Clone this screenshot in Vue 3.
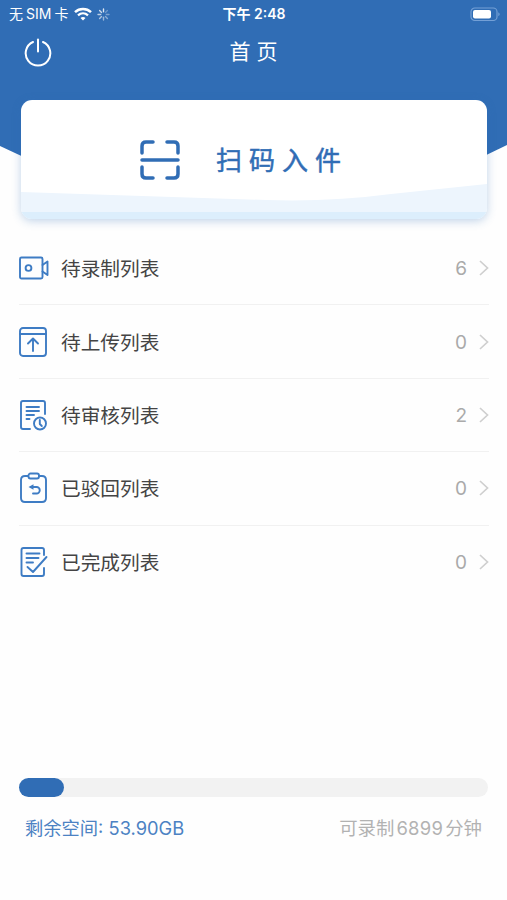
<template>
  <div class="home-page">
    <header class="header">
      <div class="status-bar">
        <div class="status-left">
          <span class="carrier">无<i>SIM</i>卡</span>
          <svg class="wifi" width="18" height="14" viewBox="0 0 18 14" fill="none" stroke="#fff">
            <path d="M1 5.1C5.5.9 12.500.9 17 5.100" stroke-width="2.500" />
            <path d="M4 8.300c2.900-2.600 7.100-2.600 10 0" stroke-width="2.300" />
            <path d="M6.500 10.900c1.500-1.300 3.500-1.300 5 0L9 13.500z" fill="#fff" stroke="none" />
          </svg>
          <svg class="spinner" width="13" height="13" viewBox="0 0 13 13" stroke="#fff" stroke-width="1.400" stroke-linecap="round">
            <line
              v-for="n in 8"
              :key="n"
              x1="6.5"
              y1="1"
              x2="6.5"
              y2="3.7"
              :transform="`rotate(${n * 45} 6.5 6.5)`"
              :opacity="0.2 + n * 0.08"
            />
          </svg>
        </div>
        <div class="time">下午 2:48</div>
        <svg class="battery" width="31" height="15" viewBox="0 0 31 15">
          <rect x="1" y="1" width="26" height="12.500" rx="3.800" fill="none" stroke="#74a0d6" stroke-width="1.200" />
          <rect x="3" y="3" width="18" height="8.500" rx="2" fill="#fff" />
          <path d="M28.500 5.200q2 2 0 4z" fill="#8db4e2" />
        </svg>
      </div>
      <div class="nav-bar">
        <button class="logout" aria-label="退出">
          <svg width="28" height="29" viewBox="0 0 28 29" fill="none" stroke="#fff" stroke-width="2" stroke-linecap="round">
            <path d="M9 4A12.300 12.300 0 1 0 19 4" />
            <path d="M14 1.500v12" />
          </svg>
        </button>
        <h1>首页</h1>
      </div>
    </header>

    <button class="scan-card">
      <svg class="wave" width="466" height="119" viewBox="0 0 466 119">
        <path d="M0 92L245 100Q310 102 370 94L466 84V119H0z" fill="#edf5fd" />
        <path d="M0 112H466V119H0z" fill="#dceefc" />
      </svg>
      <svg class="scan-icon" width="40" height="40" viewBox="0 0 40 40" fill="none" stroke="#306db5" stroke-width="3.500" stroke-linecap="round">
        <path d="M2 13V6q0-4 4-4h7M27 2h7q4 0 4 4v7M38 27v7q0 4-4 4h-7M13 38H6q-4 0-4-4v-7M2 20h36" />
      </svg>
      <span class="scan-text">扫码入件</span>
    </button>

    <ul class="list">
      <li v-for="item in items" :key="item.label" class="row">
        <svg class="row-icon" width="30" height="32" viewBox="0 0 30 32" fill="none" stroke="#3e7cc4" stroke-width="1.900" stroke-linecap="round" stroke-linejoin="round">
          <g v-if="item.icon === 'video'">
            <rect x="1" y="5.500" width="22.500" height="21" rx="1.500" />
            <circle cx="9.500" cy="16" r="2.900" />
            <path d="M23.500 13l5-3.500v13.500l-5-3.500" />
          </g>
          <g v-else-if="item.icon === 'upload'">
            <rect x="1" y="2" width="26" height="28" rx="3" />
            <path d="M1 8h26M14 25V13M9 17.500l5-5 5 5" />
          </g>
          <g v-else-if="item.icon === 'review'">
            <path d="M11 30H4q-2 0-2-2V4q0-2 2-2h20q2 0 2 2v11M7.500 8H20M7.500 12H20M7.500 16H15M7.500 20h3" />
            <circle cx="21" cy="24.500" r="6" />
            <path d="M20.800 21v4l2 2" />
          </g>
          <g v-else-if="item.icon === 'reject'">
            <path d="M9 4H6Q2 4 2 8v18q0 4 4 4h17q4 0 4-4V8q0-4-4-4h-3" />
            <rect x="9.500" y="1.500" width="10.500" height="5" rx="2" />
            <path d="M12 15h5.500a3 3 0 0 1 0 6.500H14" />
            <path d="M9.500 15l5-2.800v5.600z" fill="#3e7cc4" stroke="none" />
          </g>
          <g v-else>
            <path d="M25 9V4q0-2-2-2H4.500q-2 0-2 2v24q0 2 2 2H23q2 0 2-2v-6M7.500 7.500h13M7.500 12h12M7.500 16.500H14M8.500 21l5.500 5L27.500 11" />
          </g>
        </svg>
        <span class="label">{{ item.label }}</span>
        <span class="count">{{ item.count }}</span>
        <svg class="arrow" width="10" height="16" viewBox="0 0 10 16" fill="none" stroke="#cfcfcf" stroke-width="1.700">
          <path d="M1 1l7.500 7L1 15" />
        </svg>
      </li>
    </ul>

    <footer class="storage">
      <div class="track">
        <div class="used" :style="{ width: usedPercent + '%' }"></div>
      </div>
      <div class="storage-info">
        <span class="space">剩余空间: <i>{{ freeSpace }}</i></span>
        <span class="minutes">可录制<i>{{ minutes }}</i>分钟</span>
      </div>
    </footer>
  </div>
</template>

<script setup>
import { ref } from 'vue'

const items = ref([
  { icon: 'video', label: '待录制列表', count: 6 },
  { icon: 'upload', label: '待上传列表', count: 0 },
  { icon: 'review', label: '待审核列表', count: 2 },
  { icon: 'reject', label: '已驳回列表', count: 0 },
  { icon: 'done', label: '已完成列表', count: 0 },
])

const usedPercent = ref(9.6)
const freeSpace = ref('53.90GB')
const minutes = ref(6899)
</script>

<style>
body {
  margin: 0;
  background: #fefefe;
}
</style>

<style scoped>
.home-page {
  display: flex;
  flex-direction: column;
  width: 507px;
  height: 900px;
  overflow: hidden;
  background: #fefefe;
  font-family: Inter, "Noto Sans CJK SC", sans-serif;
}
i {
  font-style: normal;
}
button {
  border: none;
  padding: 0;
  font-family: inherit;
  cursor: pointer;
}
.header {
  flex: none;
  height: 174px;
  color: #fff;
  background: #306db5;
  clip-path: polygon(0 0, 100% 0, 100% 145px, 447px 174px, 60px 174px, 0 146px);
}
.status-bar {
  display: grid;
  grid-template-columns: 1fr auto 1fr;
  align-items: center;
  height: 28px;
  padding: 0 6px 0 9px;
}
.status-left {
  display: flex;
  align-items: center;
}
.carrier {
  display: flex;
  gap: 3px;
  font-size: 14px;
  line-height: 28px;
}
.wifi {
  margin-left: 6px;
}
.spinner {
  margin-left: 5px;
}
.time {
  margin-right: 2px;
  font-size: 14px;
  font-weight: 600;
  line-height: 28px;
}
.battery {
  justify-self: end;
}
.nav-bar {
  display: grid;
  grid-template-columns: 60px 1fr 60px;
  align-items: center;
  height: 48px;
}
.logout {
  display: flex;
  margin-left: 24px;
  background: none;
}
.nav-bar h1 {
  margin: 0;
  font-size: 21px;
  font-weight: 400;
  line-height: 48px;
  letter-spacing: 6px;
  text-indent: 6px;
  text-align: center;
}
.scan-card {
  position: relative;
  flex: none;
  display: flex;
  align-items: center;
  width: 466px;
  height: 119px;
  margin: -74px 0 0 21px;
  padding-left: 119px;
  border-radius: 11px;
  overflow: hidden;
  background: #fff;
  box-shadow: 0 2px 10px rgba(48, 109, 181, 0.3);
}
.wave {
  position: absolute;
  left: 0;
  top: 0;
}
.scan-icon,
.scan-text {
  position: relative;
}
.scan-text {
  margin-left: 36px;
  padding-bottom: 3px;
  color: #306db5;
  font-size: 26px;
  font-weight: 400;
  letter-spacing: 7px;
  -webkit-text-stroke: 0.5px #306db5;
}
.list {
  margin: 13px 0 0;
  padding: 0 18px 0 19px;
  list-style: none;
}
.row {
  display: flex;
  align-items: center;
  box-sizing: border-box;
  height: 73.4px;
  border-bottom: 1px solid #f1f1f1;
}
.row:last-child {
  border-bottom: none;
}
.label {
  flex: 1;
  margin-left: 12px;
  padding-bottom: 1px;
  color: #444;
  font-size: 19.7px;
}
.count {
  padding-top: 1px;
  color: #aaa;
  font-size: 19px;
}
.arrow {
  margin-left: 12px;
}
.storage {
  margin-top: auto;
  padding: 0 19px 58px;
}
.track {
  height: 19px;
  border-radius: 10px;
  background: #f2f2f2;
}
.used {
  height: 100%;
  border-radius: 10px;
  background: #306db5;
}
.storage-info {
  display: flex;
  justify-content: space-between;
  padding: 18px 6px 0;
  font-size: 18px;
  line-height: 27px;
}
.space {
  color: #4c82c3;
  font-size: 18.3px;
}
.minutes {
  color: #b2b2b2;
  font-size: 18.4px;
}
.minutes i {
  margin: 0 2px;
  letter-spacing: 0.3px;
}
</style>
